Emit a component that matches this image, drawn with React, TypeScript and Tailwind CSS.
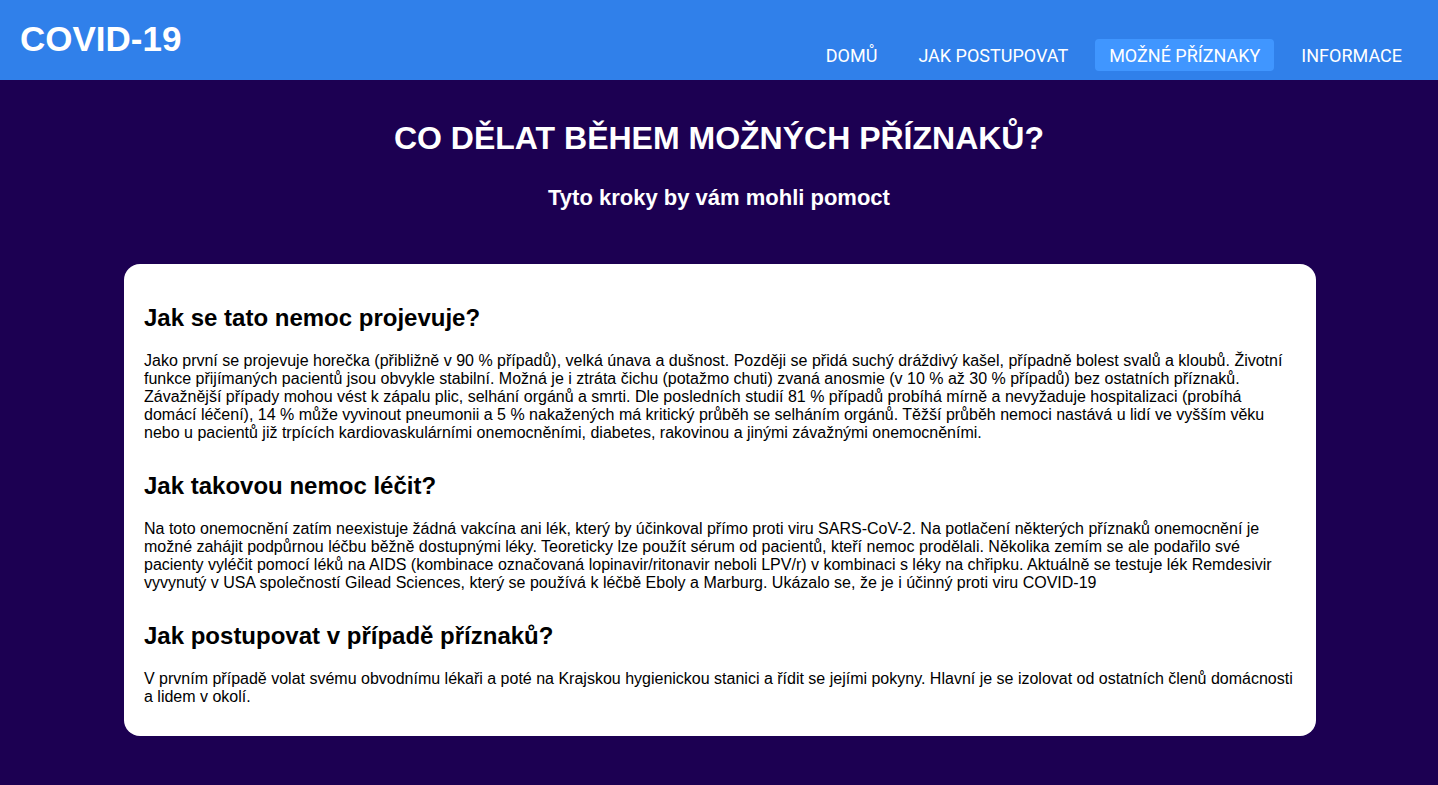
const NAV = ["DOMŮ", "JAK POSTUPOVAT", "MOŽNÉ PŘÍZNAKY", "INFORMACE"]

const SECTIONS = [
  {
    title: "Jak se tato nemoc projevuje?",
    text: "Jako první se projevuje horečka (přibližně v 90 % případů), velká únava a dušnost. Později se přidá suchý dráždivý kašel, případně bolest svalů a kloubů. Životní funkce přijímaných pacientů jsou obvykle stabilní. Možná je i ztráta čichu (potažmo chuti) zvaná anosmie (v 10 % až 30 % případů) bez ostatních příznaků. Závažnější případy mohou vést k zápalu plic, selhání orgánů a smrti. Dle posledních studií 81 % případů probíhá mírně a nevyžaduje hospitalizaci (probíhá domácí léčení), 14 % může vyvinout pneumonii a 5 % nakažených má kritický průběh se selháním orgánů. Těžší průběh nemoci nastává u lidí ve vyšším věku nebo u pacientů již trpících kardiovaskulárními onemocněními, diabetes, rakovinou a jinými závažnými onemocněními.",
  },
  {
    title: "Jak takovou nemoc léčit?",
    text: "Na toto onemocnění zatím neexistuje žádná vakcína ani lék, který by účinkoval přímo proti viru SARS-CoV-2. Na potlačení některých příznaků onemocnění je možné zahájit podpůrnou léčbu běžně dostupnými léky. Teoreticky lze použít sérum od pacientů, kteří nemoc prodělali. Několika zemím se ale podařilo své pacienty vyléčit pomocí léků na AIDS (kombinace označovaná lopinavir/ritonavir neboli LPV/r) v kombinaci s léky na chřipku. Aktuálně se testuje lék Remdesivir vyvynutý v USA společností Gilead Sciences, který se používá k léčbě Eboly a Marburg. Ukázalo se, že je i účinný proti viru COVID-19",
  },
  {
    title: "Jak postupovat v případě příznaků?",
    text: "V prvním případě volat svému obvodnímu lékaři a poté na Krajskou hygienickou stanici a řídit se jejími pokyny. Hlavní je se izolovat od ostatních členů domácnosti a lidem v okolí.",
  },
]

export default function App() {
  return (
    <div className="min-h-screen bg-[#1c0052] font-['Liberation_Sans',Arial,sans-serif]">
      {/* Header */}
      <header className="h-[80px] bg-[#3080ea] flex items-start justify-between pl-[20px] pr-[22px]">
        <h1 className="text-white text-[35px] font-bold leading-[40px] mt-[19px]">COVID-19</h1>
        <nav className="flex gap-[13px] mt-[39px]">
          {NAV.map((item) => (
            <a
              key={item}
              className={`h-[32px] flex items-center px-[14px] rounded-[4px] text-white text-[18px] font-['Roboto',sans-serif] ${
                item === "MOŽNÉ PŘÍZNAKY" ? "bg-[#4096ff]" : ""
              }`}
            >
              {item}
            </a>
          ))}
        </nav>
      </header>

      {/* Hero */}
      <div className="text-center text-white">
        <h2 className="text-[32px] font-bold leading-[37px] pt-[40px]">CO DĚLAT BĚHEM MOŽNÝCH PŘÍZNAKŮ?</h2>
        <h3 className="text-[22px] font-bold leading-[25px] mt-[28px]">Tyto kroky by vám mohli pomoct</h3>
      </div>

      {/* Card */}
      <div className="ml-[124px] w-[1192px] mt-[54px] bg-white rounded-[16px] px-[20px] pt-[40px] pb-[30px]">
        {SECTIONS.map((s, i) => (
          <div key={s.title} className={i > 0 ? "mt-[30px]" : ""}>
            <h2 className="text-[24px] font-bold leading-[28px] text-black">{s.title}</h2>
            <p className="mt-[20px] text-[16px] leading-[18px] text-black">{s.text}</p>
          </div>
        ))}
      </div>
    </div>
  )
}
